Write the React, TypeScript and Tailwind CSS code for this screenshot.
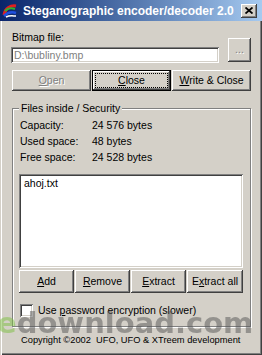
import React from "react";

const raised =
  "shadow-[inset_-1px_-1px_#404040,inset_1px_1px_#ffffff,inset_-2px_-2px_#808080]";
const disabledText = "text-[#808080] [text-shadow:1px_1px_#ffffff]";

function AppIcon() {
  return (
    <svg width="16" height="16" viewBox="0 0 16 16">
      <path d="M2 12 C3 5 9 2 14 3" stroke="#e02020" strokeWidth="3" fill="none" />
      <path d="M3 8 C6 5 10 5 13 6" stroke="#30b030" strokeWidth="2" fill="none" />
      <path d="M2 13 C6 9 11 9 14 10" stroke="#2050e0" strokeWidth="2.5" fill="none" />
      <path d="M4 14 C8 12 11 13 14 13" stroke="#ffffff" strokeWidth="1.5" fill="none" />
    </svg>
  );
}

interface BtnProps {
  children: React.ReactNode;
  className?: string;
  disabled?: boolean;
}

const Btn: React.FC<BtnProps> = ({ children, className, disabled }) => {
  return (
    <button
      className={`flex items-center justify-center bg-[#d4d0c8] ${raised} ${
        disabled ? disabledText : "text-black"
      } ${className ?? ""}`}
    >
      {children}
    </button>
  );
};

export default function App() {
  return (
    <div className="relative w-[262px] h-[355px] overflow-hidden bg-[#d4d0c8] text-[10.5px] leading-[13px] text-black font-['Liberation_Sans',Arial,sans-serif] shadow-[inset_1px_1px_#d4d0c8,inset_2px_2px_#ffffff,inset_-1px_-1px_#404040,inset_-2px_-2px_#808080]">
      {/* title bar */}
      <div className="flex h-[21px] items-center bg-linear-to-r from-[#0a246a] to-[#a6caf0] pl-[2px] pr-[5px]">
        <AppIcon />
        <span className="ml-[5px] text-[12px] leading-[14px] font-bold text-white">
          Steganographic encoder/decoder 2.0
        </span>
        <button className={`ml-auto flex h-[14px] w-[16px] items-center justify-center bg-[#d4d0c8] ${raised}`}>
          <svg width="8" height="7" viewBox="0 0 8 7">
            <path d="M0.5 0.5 L7.5 6.5 M7.5 0.5 L0.5 6.5" stroke="#000" strokeWidth="1.8" />
          </svg>
        </button>
      </div>

      <div className="flex flex-col pl-[11px] pt-[10px]">
        <div className="flex items-start">
          <div className="flex w-[208px] flex-col">
            <span className="h-[13px] pl-[1px]">Bitmap file:</span>
            <div className="mt-[3px] flex h-[16px] items-center bg-white pl-[3px] text-[#808080] shadow-[inset_1px_1px_#808080,inset_-1px_-1px_#ffffff,inset_2px_2px_#404040,inset_-2px_-2px_#d4d0c8]">
              D:\bubliny.bmp
            </div>
          </div>
          <Btn disabled className="ml-[9px] mt-[7px] h-[24px] w-[23px] pb-[2px]">
            ...
          </Btn>
        </div>

        <div className="ml-[1px] mt-[7px] flex gap-[1px]">
          <Btn disabled className="h-[21px] w-[79px]">
            <u>O</u>pen
          </Btn>
          <button className="h-[21px] w-[79px] bg-[#d4d0c8] p-[3px] shadow-[inset_0_0_0_1px_#000000,inset_-2px_-2px_#404040,inset_2px_2px_#ffffff,inset_-3px_-3px_#808080]">
            <div className="flex h-full w-full items-center justify-center border border-dotted border-black">
              <span>
                <u>C</u>lose
              </span>
            </div>
          </button>
          <Btn className="h-[21px] w-[79px]">
            <u>W</u>rite &amp; Close
          </Btn>
        </div>

        {/* group box */}
        <div className="relative mt-[17px] ml-[1px] h-[219px] w-[239px] border border-[#808080] pl-[6px] pt-[8px] shadow-[inset_1px_1px_#ffffff,1px_1px_#ffffff]">
          <span className="absolute left-[6px] top-[-7px] bg-[#d4d0c8] px-[2px]">
            Files inside / Security
          </span>
          <div className="flex flex-col pl-[1px]">
            {[
              ["Capacity:", "24 576 bytes"],
              ["Used space:", "48 bytes"],
              ["Free space:", "24 528 bytes"],
            ].map(([label, value]) => (
              <div key={label} className="flex h-[16px] items-center">
                <span className="w-[72px]">{label}</span>
                <span>{value}</span>
              </div>
            ))}
          </div>
          <div className="mt-[9px] h-[94px] w-[224px] bg-white pl-[5px] pt-[3px] shadow-[inset_1px_1px_#808080,inset_-1px_-1px_#ffffff,inset_2px_2px_#404040,inset_-2px_-2px_#d4d0c8]">
            ahoj.txt
          </div>
          <div className="mt-[2px] flex gap-[1px]">
            <Btn className="h-[23px] w-[55px]">
              <u>A</u>dd
            </Btn>
            <Btn className="h-[23px] w-[55px]">
              <u>R</u>emove
            </Btn>
            <Btn className="h-[23px] w-[55px]">
              <u>E</u>xtract
            </Btn>
            <Btn className="h-[23px] w-[56px]">
              E<u>x</u>tract all
            </Btn>
          </div>
          <div className="mt-[11px] flex h-[13px] items-center pl-[1px]">
            <span className="h-[13px] w-[13px] bg-white shadow-[inset_1px_1px_#808080,inset_-1px_-1px_#ffffff,inset_2px_2px_#404040,inset_-2px_-2px_#d4d0c8]" />
            <span className="ml-[5px]">
              Use <u>p</u>assword encryption (slower)
            </span>
          </div>
        </div>

        <div className="mt-[7px] pl-[10px] text-[9.3px] leading-[13px]">
          Copyright ©2002&nbsp; UFO, UFO &amp; XTreem development
        </div>
      </div>

      {/* watermark */}
      <div className="pointer-events-none absolute left-[-3px] top-[309px] text-[29px] leading-none font-bold font-['DejaVu_Sans',sans-serif] opacity-50">
        <span className="text-[#7cc040]">e</span>
        <span className="text-[#555555]">download.com</span>
      </div>
    </div>
  );
}
